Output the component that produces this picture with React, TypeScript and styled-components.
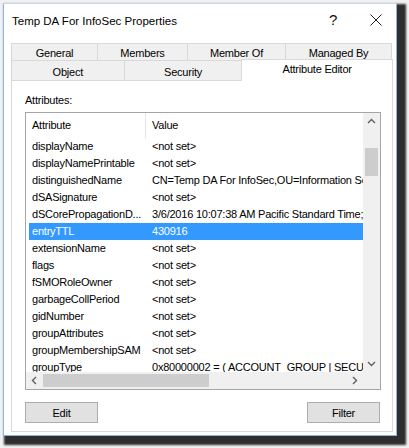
import styled, { createGlobalStyle } from 'styled-components';

const GlobalStyle = createGlobalStyle`
  html, body {
    margin: 0;
    padding: 0;
    background: #f1f1f1;
  }
  body {
    font-family: "Liberation Sans", Arial, sans-serif;
    font-size: 11px;
    letter-spacing: -0.22px;
    color: #000;
  }
`;

const Page = styled.div`
  padding: 3px 0 0 3px;
  height: 448px;
  box-sizing: border-box;
`;

const Window = styled.div`
  width: 394px;
  height: 433px;
  box-sizing: border-box;
  background: #fff;
  border: 1px solid #8ab6e2;
  border-top-color: #c9d9ea;
  box-shadow: 5px 5px 2px 4px #2e2e2e;
  display: flex;
  flex-direction: column;
`;

const TitleBar = styled.div`
  height: 31px;
  display: flex;
  align-items: center;
  padding-left: 8px;
`;

const Title = styled.div`
  flex: 1;
  font-size: 11.5px;
  letter-spacing: 0;
  padding-top: 2px;
`;

const CaptionButton = styled.div<{ w: number }>`
  width: ${(p) => p.w}px;
  height: 31px;
  display: flex;
  align-items: center;
  justify-content: center;
  font-size: 15px;
  color: #111;
`;

const Body = styled.div`
  flex: 1;
  display: flex;
  flex-direction: column;
  padding: 8px 3px 3px 7px;
`;

const TabRow = styled.div<{ h: number }>`
  display: flex;
  height: ${(p) => p.h}px;
`;

const Tab = styled.div<{ w: number; active?: boolean }>`
  width: ${(p) => p.w}px;
  box-sizing: border-box;
  border: 1px solid #d9d9d9;
  border-bottom: none;
  margin-left: -1px;
  &:first-child {
    margin-left: 0;
  }
  background: ${(p) => (p.active ? '#fff' : '#f0f0f0')};
  display: flex;
  align-items: center;
  justify-content: center;
  white-space: nowrap;
  padding-top: 2px;
  position: relative;
  ${(p) =>
    p.active
      ? `
    margin-top: -1px;
    height: calc(100% + 2px);
    z-index: 1;
    align-items: flex-start;
    padding-top: 3px;
  `
      : ''}
`;

const Panel = styled.div`
  flex: 1;
  border: 1px solid #d9d9d9;
  display: flex;
  flex-direction: column;
  padding: 12px 11px 8px 13px;
`;

const Label = styled.div`
  line-height: 15px;
  margin-bottom: 4px;
`;

const ListBox = styled.div`
  height: 278px;
  box-sizing: border-box;
  border: 1px solid #a5a5a5;
  display: grid;
  grid-template-columns: 1fr 17px;
  grid-template-rows: 1fr 17px;
  background: #fff;
`;

const ListContent = styled.div`
  display: flex;
  flex-direction: column;
  overflow: hidden;
  min-width: 0;
`;

const Header = styled.div`
  height: 25px;
  flex-shrink: 0;
  display: flex;
`;

const HeaderCell = styled.div<{ w?: number; divider?: boolean }>`
  ${(p) => (p.w ? `width: ${p.w}px; flex-shrink: 0;` : 'flex: 1;')}
  box-sizing: border-box;
  display: flex;
  align-items: center;
  padding-left: 6px;
  padding-bottom: 2px;
  border-right: ${(p) => (p.divider ? '1px solid #e5e5e5' : 'none')};
`;

const Rows = styled.div`
  flex: 1;
  overflow: hidden;
`;

const Row = styled.div<{ selected?: boolean }>`
  height: 17px;
  line-height: 17px;
  display: flex;
  margin-left: 3px;
  white-space: nowrap;
  background: ${(p) => (p.selected ? '#3399ff' : 'transparent')};
  color: ${(p) => (p.selected ? '#fff' : '#000')};
`;

const NameCell = styled.div`
  width: 117px;
  flex-shrink: 0;
  padding-left: 3px;
  box-sizing: border-box;
  overflow: hidden;
`;

const ValueCell = styled.div`
  flex: 1;
  padding-left: 6px;
  overflow: hidden;
`;

const VScroll = styled.div`
  background: #f0f0f0;
  display: flex;
  flex-direction: column;
  align-items: center;
`;

const HScroll = styled.div`
  background: #f0f0f0;
  display: flex;
  align-items: center;
`;

const Corner = styled.div`
  background: #f0f0f0;
`;

const ArrowBox = styled.div`
  width: 17px;
  height: 17px;
  flex-shrink: 0;
  display: flex;
  align-items: center;
  justify-content: center;
`;

const VThumbSlot = styled.div`
  flex: 1;
  align-self: stretch;
  padding: 0 2px;
`;

const VThumb = styled.div`
  margin-top: 18px;
  height: 28px;
  background: #cdcdcd;
`;

const HTrack = styled.div`
  flex: 1;
  align-self: stretch;
  padding: 2px 0;
  display: flex;
`;

const HThumb = styled.div`
  width: 166px;
  background: #cdcdcd;
`;

const ButtonRow = styled.div`
  display: flex;
  justify-content: space-between;
  margin-top: 12px;
  padding-right: 1px;
`;

const Button = styled.div`
  width: 73px;
  height: 21px;
  box-sizing: border-box;
  background: #e1e1e1;
  border: 1px solid #adadad;
  display: flex;
  align-items: center;
  justify-content: center;
`;

const Chevron = ({ dir }: { dir: 'up' | 'down' | 'left' | 'right' }) => {
  const rot = { up: 0, right: 90, down: 180, left: 270 }[dir];
  return (
    <svg width="9" height="9" viewBox="0 0 9 9" style={{ transform: `rotate(${rot}deg)` }}>
      <path d="M1 6 L4.5 2.5 L8 6" fill="none" stroke="#606060" strokeWidth="1.4" />
    </svg>
  );
};

const rows: [string, string][] = [
  ['displayName', '<not set>'],
  ['displayNamePrintable', '<not set>'],
  ['distinguishedName', 'CN=Temp DA For InfoSec,OU=Information Security,DC=corp,DC=contoso,DC=com'],
  ['dSASignature', '<not set>'],
  ['dSCorePropagationD...', '3/6/2016 10:07:38 AM Pacific Standard Time; 1/1/1601 12:00:00 AM'],
  ['entryTTL', '430916'],
  ['extensionName', '<not set>'],
  ['flags', '<not set>'],
  ['fSMORoleOwner', '<not set>'],
  ['garbageCollPeriod', '<not set>'],
  ['gidNumber', '<not set>'],
  ['groupAttributes', '<not set>'],
  ['groupMembershipSAM', '<not set>'],
  ['groupType', '0x80000002 = ( ACCOUNT_GROUP | SECURITY_ENABLED )'],
];

const App = () => {
  return (
    <Page>
      <GlobalStyle />
      <Window>
        <TitleBar>
          <Title>Temp DA For InfoSec Properties</Title>
          <CaptionButton w={46}>?</CaptionButton>
          <CaptionButton w={40}>
            <svg width="12" height="12" viewBox="0 0 12 12">
              <path d="M0.5 0.5 L11.5 11.5 M11.5 0.5 L0.5 11.5" stroke="#222" strokeWidth="1" />
            </svg>
          </CaptionButton>
        </TitleBar>
        <Body>
          <TabRow h={17}>
            <Tab w={87}>General</Tab>
            <Tab w={91}>Members</Tab>
            <Tab w={99}>Member Of</Tab>
            <Tab w={107}>Managed By</Tab>
          </TabRow>
          <TabRow h={20}>
            <Tab w={114}>Object</Tab>
            <Tab w={119}>Security</Tab>
            <Tab w={152} active>
              Attribute Editor
            </Tab>
          </TabRow>
          <Panel>
            <Label>Attributes:</Label>
            <ListBox>
              <ListContent>
                <Header>
                  <HeaderCell w={120} divider>
                    Attribute
                  </HeaderCell>
                  <HeaderCell>Value</HeaderCell>
                </Header>
                <Rows>
                  {rows.map(([name, value]) => (
                    <Row key={name} selected={name === 'entryTTL'}>
                      <NameCell>{name}</NameCell>
                      <ValueCell>{value}</ValueCell>
                    </Row>
                  ))}
                </Rows>
              </ListContent>
              <VScroll>
                <ArrowBox>
                  <Chevron dir="up" />
                </ArrowBox>
                <VThumbSlot>
                  <VThumb />
                </VThumbSlot>
                <ArrowBox>
                  <Chevron dir="down" />
                </ArrowBox>
              </VScroll>
              <HScroll>
                <ArrowBox>
                  <Chevron dir="left" />
                </ArrowBox>
                <HTrack>
                  <HThumb />
                </HTrack>
                <ArrowBox>
                  <Chevron dir="right" />
                </ArrowBox>
              </HScroll>
              <Corner />
            </ListBox>
            <ButtonRow>
              <Button>Edit</Button>
              <Button>Filter</Button>
            </ButtonRow>
          </Panel>
        </Body>
      </Window>
    </Page>
  );
};

export default App;
